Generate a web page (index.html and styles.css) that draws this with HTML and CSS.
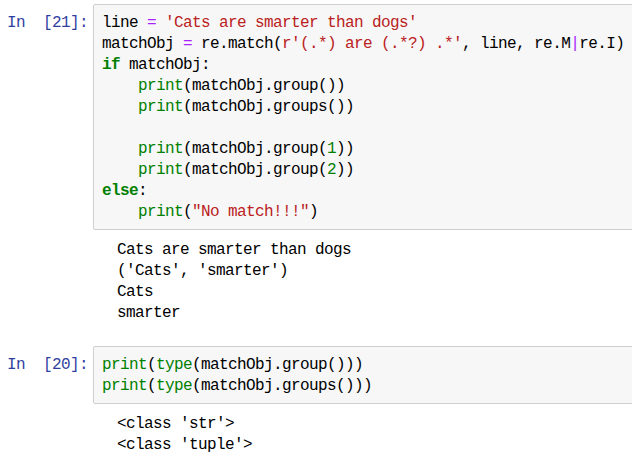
FILE: index.html
```html
<!DOCTYPE html>
<html>
<head>
<meta charset="utf-8">
<link rel="stylesheet" href="styles.css">
</head>
<body>
<div class="notebook">
  <div class="cell">
    <div class="input">
      <div class="prompt">In&nbsp;&nbsp;[21]:</div>
      <div class="code">
        <div class="ln">line <span class="o">=</span> <span class="s">'Cats are smarter than dogs'</span></div>
        <div class="ln">matchObj <span class="o">=</span> re.match(<span class="s">r'(.*) are (.*?) .*'</span>, line, re.M<span class="o">|</span>re.I)</div>
        <div class="ln"><span class="k">if</span> matchObj:</div>
        <div class="ln">    <span class="b">print</span>(matchObj.group())</div>
        <div class="ln">    <span class="b">print</span>(matchObj.groups())</div>
        <div class="ln"> </div>
        <div class="ln">    <span class="b">print</span>(matchObj.group(<span class="n">1</span>))</div>
        <div class="ln">    <span class="b">print</span>(matchObj.group(<span class="n">2</span>))</div>
        <div class="ln"><span class="k">else</span>:</div>
        <div class="ln">    <span class="b">print</span>(<span class="s">"No match!!!"</span>)</div>
      </div>
    </div>
    <div class="output">
      <div class="ln">Cats are smarter than dogs</div>
      <div class="ln">('Cats', 'smarter')</div>
      <div class="ln">Cats</div>
      <div class="ln">smarter</div>
    </div>
  </div>
  <div class="cell">
    <div class="input">
      <div class="prompt">In&nbsp;&nbsp;[20]:</div>
      <div class="code">
        <div class="ln"><span class="b">print</span>(<span class="b">type</span>(matchObj.group()))</div>
        <div class="ln"><span class="b">print</span>(<span class="b">type</span>(matchObj.groups()))</div>
      </div>
    </div>
    <div class="output">
      <div class="ln">&lt;class 'str'&gt;</div>
      <div class="ln">&lt;class 'tuple'&gt;</div>
    </div>
  </div>
</div>
</body>
</html>
```
FILE: styles.css
```css
html, body {
  margin: 0;
  padding: 0;
  background: #ffffff;
  overflow: hidden;
}
.notebook {
  width: 660px;
  padding-top: 4px;
  display: flex;
  flex-direction: column;
  gap: 22px;
  font-family: "Liberation Mono", "DejaVu Sans Mono", monospace;
  font-size: 16px;
  letter-spacing: -0.6px;
  line-height: 21px;
  color: #000;
}
.ln {
  white-space: pre;
  height: 21px;
}
.cell {
  display: flex;
  flex-direction: column;
  gap: 9px;
}
.input {
  display: flex;
  align-items: flex-start;
}
.prompt {
  width: 86px;
  padding-left: 7px;
  padding-top: 9px;
  color: #303f9f;
  white-space: nowrap;
}
.code {
  flex: 1;
  background: #f7f7f7;
  border: 1px solid #cfcfcf;
  border-radius: 2px;
  padding: 8px 8px 6px;
}
.output {
  padding-left: 117px;
  padding-top: 1px;
}
.o { color: #aa22ff; }
.s { color: #ba2121; }
.k { color: #008000; font-weight: bold; }
.b { color: #008000; }
.n { color: #008000; }
```
